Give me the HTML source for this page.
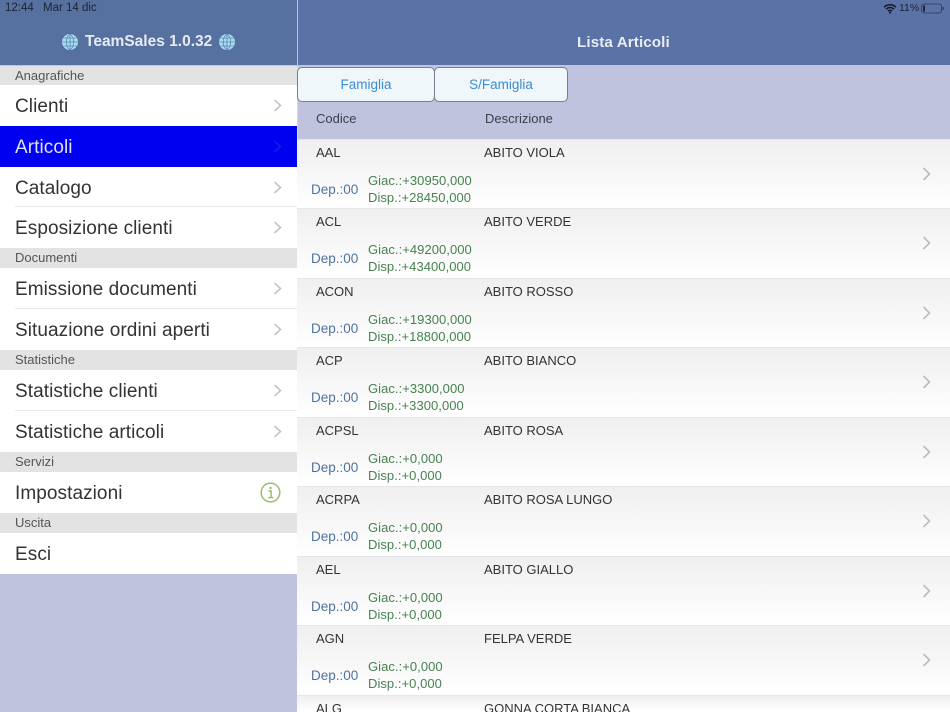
<!DOCTYPE html>
<html><head><meta charset="utf-8">
<style>
html,body{margin:0;padding:0;width:950px;height:712px;overflow:hidden;background:#bfc3de}
body{font-family:"Liberation Sans",sans-serif;position:relative}
div,svg{position:absolute}
.t{white-space:nowrap;line-height:1}
.sec{left:0;width:297px;background:#e3e3e3}
.sec .t{left:15px;top:3px;font-size:13px;color:#555}
.row{left:0;width:297px;height:41px;background:#fff}
.row .t{left:15px;top:12px;font-size:19px;color:#333;letter-spacing:.07px}
.line{left:15px;right:0;bottom:0;height:1px;background:#e9e9e9}
.row svg{left:273px;top:14px}
.it{left:297px;width:653px;height:70px;background:linear-gradient(#efefef,#fff);border-top:1px solid #e6e6ea;box-sizing:border-box;overflow:hidden}
.it .c{left:19px;top:6px;font-size:13px;color:#333}
.it .d{left:187px;top:6px;font-size:13px;color:#333}
.it .p{left:14px;top:43px;font-size:13.5px;color:#4d739f}
.it .g{left:71px;top:34px;font-size:13px;color:#46824f;letter-spacing:.05px}
.it .h{left:71px;top:51px;font-size:13px;color:#46824f;letter-spacing:.05px}
.it svg{left:625px;top:27px}
.btn{top:67px;height:35px;background:#eff7fb;border:1px solid #777d8c;border-radius:5px;box-sizing:border-box;color:#3d8bd0;font-size:13.5px;text-align:center;line-height:34px}
</style></head>
<body>
<div style="left:0;top:0;width:297px;height:65px;background:#56709f"></div>
<div style="left:298px;top:0;width:652px;height:65px;background:#5a72a6"></div>
<div class="t" style="left:5px;top:3px;font-size:11.5px;color:#1c2433">12:44</div>
<div class="t" style="left:43px;top:3px;font-size:11.5px;color:#1c2433">Mar 14 dic</div>
<svg style="left:61px;top:33px" width="18" height="18" viewBox="0 0 18 18"><circle cx="9" cy="9" r="8" fill="#a9dcef"/><path d="M1 9h16M2.5 5h13M2.5 13h13M9 1v16M9 1c-5 4-5 12 0 16M9 1c5 4 5 12 0 16" fill="none" stroke="#5b86b4" stroke-width=".8"/></svg>
<div class="t" style="left:85px;top:34px;font-size:15.5px;font-weight:700;color:#e6ebf3">TeamSales 1.0.32</div>
<svg style="left:218px;top:33px" width="18" height="18" viewBox="0 0 18 18"><circle cx="9" cy="9" r="8" fill="#a9dcef"/><path d="M1 9h16M2.5 5h13M2.5 13h13M9 1v16M9 1c-5 4-5 12 0 16M9 1c5 4 5 12 0 16" fill="none" stroke="#5b86b4" stroke-width=".8"/></svg>
<div class="t" style="left:577px;top:35px;font-size:15.2px;font-weight:700;color:#e8ecf4;letter-spacing:.1px">Lista Articoli</div>
<svg style="left:883px;top:3px" width="14" height="11" viewBox="0 0 14 11"><path d="M1 4.2a8.5 8.5 0 0 1 12 0M3 6.2a5.6 5.6 0 0 1 8 0M5 8.2a2.8 2.8 0 0 1 4 0" fill="none" stroke="#131a28" stroke-width="1.5"/><circle cx="7" cy="9.6" r="1" fill="#131a28"/></svg>
<div class="t" style="left:899px;top:3px;font-size:10.5px;color:#1c2433">11%</div>
<svg style="left:921px;top:3px" width="24" height="11" viewBox="0 0 24 11"><rect x=".5" y="1" width="20" height="9" rx="2.5" fill="none" stroke="#2e3a55" stroke-width=".8"/><rect x="2" y="2.5" width="2" height="6" fill="#1c2433"/><rect x="21.5" y="4" width="1.2" height="3" fill="#2e3a55"/></svg>

<div class="sec" style="top:66px;height:19px"><div class="t">Anagrafiche</div></div>
<div class="row" style="top:85px"><div class="t">Clienti</div><svg width="9" height="13" viewBox="0 0 9 13"><path d="M1.5 1l6 5.5-6 5.5" fill="none" stroke="#c4c4c8" stroke-width="1.6"/></svg></div>
<div class="row" style="top:126px;background:#0000f0"><div class="t" style="color:#dfe0f6">Articoli</div><svg width="9" height="13" viewBox="0 0 9 13"><path d="M1.5 1l6 5.5-6 5.5" fill="none" stroke="#1a1ae0" stroke-width="1.6"/></svg></div>
<div class="row" style="top:167px;height:40px"><div class="t">Catalogo</div><div class="line"></div><svg width="9" height="13" viewBox="0 0 9 13"><path d="M1.5 1l6 5.5-6 5.5" fill="none" stroke="#c4c4c8" stroke-width="1.6"/></svg></div>
<div class="row" style="top:207px"><div class="t">Esposizione clienti</div><svg width="9" height="13" viewBox="0 0 9 13"><path d="M1.5 1l6 5.5-6 5.5" fill="none" stroke="#c4c4c8" stroke-width="1.6"/></svg></div>
<div class="sec" style="top:248px;height:20px"><div class="t">Documenti</div></div>
<div class="row" style="top:268px"><div class="t">Emissione documenti</div><div class="line"></div><svg width="9" height="13" viewBox="0 0 9 13"><path d="M1.5 1l6 5.5-6 5.5" fill="none" stroke="#c4c4c8" stroke-width="1.6"/></svg></div>
<div class="row" style="top:309px"><div class="t">Situazione ordini aperti</div><svg width="9" height="13" viewBox="0 0 9 13"><path d="M1.5 1l6 5.5-6 5.5" fill="none" stroke="#c4c4c8" stroke-width="1.6"/></svg></div>
<div class="sec" style="top:350px;height:20px"><div class="t">Statistiche</div></div>
<div class="row" style="top:370px"><div class="t">Statistiche clienti</div><div class="line"></div><svg width="9" height="13" viewBox="0 0 9 13"><path d="M1.5 1l6 5.5-6 5.5" fill="none" stroke="#c4c4c8" stroke-width="1.6"/></svg></div>
<div class="row" style="top:411px"><div class="t">Statistiche articoli</div><svg width="9" height="13" viewBox="0 0 9 13"><path d="M1.5 1l6 5.5-6 5.5" fill="none" stroke="#c4c4c8" stroke-width="1.6"/></svg></div>
<div class="sec" style="top:452px;height:20px"><div class="t">Servizi</div></div>
<div class="row" style="top:472px"><div class="t">Impostazioni</div><svg style="left:260px;top:10px" width="21" height="21" viewBox="0 0 21 21"><circle cx="10.5" cy="10.5" r="9.3" fill="none" stroke="#9aba62" stroke-width="1.4"/><circle cx="10.5" cy="6" r="1.2" fill="#9aba62"/><path d="M8.5 9h2.6v6.5M8.3 15.6h5" fill="none" stroke="#9aba62" stroke-width="1.4"/></svg></div>
<div class="sec" style="top:513px;height:20px"><div class="t">Uscita</div></div>
<div class="row" style="top:533px"><div class="t">Esci</div></div>
<div style="left:297px;top:66px;width:1px;height:646px;background:#d9d9e6"></div>

<div class="btn" style="left:297px;width:138px">Famiglia</div>
<div class="btn" style="left:434px;width:134px">S/Famiglia</div>
<div class="t" style="left:316px;top:112px;font-size:13px;color:#3a3f4c">Codice</div>
<div class="t" style="left:485px;top:112px;font-size:13px;color:#3a3f4c">Descrizione</div>

<div class="it" style="top:139px"><div class="t c">AAL</div><div class="t d">ABITO VIOLA</div><div class="t p">Dep.:00</div><div class="t g">Giac.:+30950,000</div><div class="t h">Disp.:+28450,000</div><svg width="9" height="14" viewBox="0 0 9 14"><path d="M1.5 1l6 6-6 6" fill="none" stroke="#bcbcc0" stroke-width="1.6"/></svg></div>
<div class="it" style="top:208px"><div class="t c">ACL</div><div class="t d">ABITO VERDE</div><div class="t p">Dep.:00</div><div class="t g">Giac.:+49200,000</div><div class="t h">Disp.:+43400,000</div><svg width="9" height="14" viewBox="0 0 9 14"><path d="M1.5 1l6 6-6 6" fill="none" stroke="#bcbcc0" stroke-width="1.6"/></svg></div>
<div class="it" style="top:278px"><div class="t c">ACON</div><div class="t d">ABITO ROSSO</div><div class="t p">Dep.:00</div><div class="t g">Giac.:+19300,000</div><div class="t h">Disp.:+18800,000</div><svg width="9" height="14" viewBox="0 0 9 14"><path d="M1.5 1l6 6-6 6" fill="none" stroke="#bcbcc0" stroke-width="1.6"/></svg></div>
<div class="it" style="top:347px"><div class="t c">ACP</div><div class="t d">ABITO BIANCO</div><div class="t p">Dep.:00</div><div class="t g">Giac.:+3300,000</div><div class="t h">Disp.:+3300,000</div><svg width="9" height="14" viewBox="0 0 9 14"><path d="M1.5 1l6 6-6 6" fill="none" stroke="#bcbcc0" stroke-width="1.6"/></svg></div>
<div class="it" style="top:417px"><div class="t c">ACPSL</div><div class="t d">ABITO ROSA</div><div class="t p">Dep.:00</div><div class="t g">Giac.:+0,000</div><div class="t h">Disp.:+0,000</div><svg width="9" height="14" viewBox="0 0 9 14"><path d="M1.5 1l6 6-6 6" fill="none" stroke="#bcbcc0" stroke-width="1.6"/></svg></div>
<div class="it" style="top:486px"><div class="t c">ACRPA</div><div class="t d">ABITO ROSA LUNGO</div><div class="t p">Dep.:00</div><div class="t g">Giac.:+0,000</div><div class="t h">Disp.:+0,000</div><svg width="9" height="14" viewBox="0 0 9 14"><path d="M1.5 1l6 6-6 6" fill="none" stroke="#bcbcc0" stroke-width="1.6"/></svg></div>
<div class="it" style="top:556px"><div class="t c">AEL</div><div class="t d">ABITO GIALLO</div><div class="t p">Dep.:00</div><div class="t g">Giac.:+0,000</div><div class="t h">Disp.:+0,000</div><svg width="9" height="14" viewBox="0 0 9 14"><path d="M1.5 1l6 6-6 6" fill="none" stroke="#bcbcc0" stroke-width="1.6"/></svg></div>
<div class="it" style="top:625px"><div class="t c">AGN</div><div class="t d">FELPA VERDE</div><div class="t p">Dep.:00</div><div class="t g">Giac.:+0,000</div><div class="t h">Disp.:+0,000</div><svg width="9" height="14" viewBox="0 0 9 14"><path d="M1.5 1l6 6-6 6" fill="none" stroke="#bcbcc0" stroke-width="1.6"/></svg></div>
<div class="it" style="top:695px;height:17px"><div class="t c">ALG</div><div class="t d">GONNA CORTA BIANCA</div></div>
</body></html>
